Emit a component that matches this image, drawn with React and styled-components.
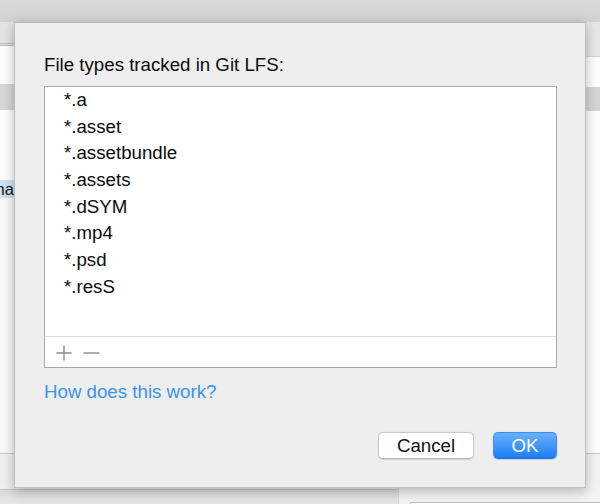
import React from 'react';
import styled, { createGlobalStyle } from 'styled-components';

const GlobalStyle = createGlobalStyle`
	html, body {
		margin: 0;
		padding: 0;
		width: 600px;
		height: 504px;
		overflow: hidden;
		background: #ffffff;
	}
	* {
		box-sizing: border-box;
	}
`;

const FONT = `"Liberation Sans", "Helvetica Neue", Arial, sans-serif`;

/* the window sitting behind the sheet */
const Window = styled.div`
	position: relative;
	width: 600px;
	height: 504px;
	display: flex;
	flex-direction: column;
	font-family: ${FONT};
	overflow: hidden;
`;

const TitleBar = styled.div`
	height: 22px;
	flex: none;
	background: linear-gradient(#d9d9d9, #d2d2d2);
`;

const Panes = styled.div`
	flex: 1;
	display: flex;
	min-height: 0;
`;

const Pane = styled.div`
	display: flex;
	flex-direction: column;
	width: ${(p) => p.width || 'auto'};
	flex: ${(p) => (p.width ? 'none' : 1)};
	border-left: ${(p) => (p.divided ? '1px solid #d4d4d4' : 'none')};
`;

const Band = styled.div`
	flex: none;
	height: ${(p) => p.h}px;
	background: ${(p) => p.bg || '#ffffff'};
	border-bottom: ${(p) => p.rule || 'none'};
	font-size: 16.5px;
	line-height: ${(p) => p.h}px;
	color: #111;
	white-space: nowrap;
	overflow: hidden;
`;

const SelectedLabel = styled.span`
	display: block;
	margin-left: -9px;
`;

const Filler = styled.div`
	flex: 1;
	background: ${(p) => p.bg || '#ffffff'};
`;

const Footer = styled.div`
	flex: none;
	height: 51px;
	border-top: 1px solid #c9c9c9;
	display: flex;
	flex-direction: column;
	background: ${(p) => p.bg || '#efefef'};
`;

const FooterStrip = styled.div`
	flex: 1;
	background: linear-gradient(#dcdcdc, #e6e6e6);
	border-top: 1px solid #c6c6c6;
`;

const FooterBox = styled.div`
	margin: 48px 0 0 11px;
	flex: 1;
	background: #ffffff;
	border-top: 1px solid #bcbcbc;
	border-left: 1px solid #cfcfcf;
`;

/* the sheet itself */
const Sheet = styled.div`
	position: absolute;
	left: 14px;
	top: 22px;
	width: 572px;
	height: 466px;
	background: #eeeeee;
	border: 1px solid #bdbdbd;
	border-top: 1px solid #b8b8b8;
	box-shadow: 0 3px 12px rgba(0, 0, 0, 0.28);
	padding: 31px 28px 0 29px;
	display: flex;
	flex-direction: column;
	font-family: ${FONT};
	font-size: 18.7px;
	color: #0c0c0c;
`;

const Heading = styled.div`
	line-height: 22px;
	margin-bottom: 10px;
`;

const ListBox = styled.div`
	height: 282px;
	background: #ffffff;
	border: 1px solid #a9a9a9;
	display: flex;
	flex-direction: column;
`;

const List = styled.ul`
	list-style: none;
	margin: 0;
	padding: 0;
	height: 250px;
	border-bottom: 1px solid #dcdcdc;
`;

const Row = styled.li`
	height: 26.67px;
	line-height: 26.67px;
	padding-left: 19px;
`;

const ListTools = styled.div`
	flex: 1;
	display: flex;
	align-items: center;
	gap: 11px;
	padding: 1px 0 0 10px;
`;

const ToolButton = styled.button`
	border: none;
	background: none;
	padding: 0;
	width: 17px;
	height: 17px;
	display: flex;
	align-items: center;
	justify-content: center;
	color: #8a8a8a;
`;

const HelpLink = styled.a`
	display: block;
	margin-top: 13px;
	line-height: 22px;
	color: #3a93f6;
	text-decoration: none;
`;

const Actions = styled.div`
	margin-top: 29px;
	display: flex;
	justify-content: flex-end;
	gap: 19px;
`;

const Button = styled.button`
	height: 27px;
	width: ${(p) => p.w}px;
	padding: 0;
	border-radius: 5px;
	font-family: ${FONT};
	font-size: 18.7px;
	line-height: 25px;
	color: ${(p) => (p.primary ? '#ffffff' : '#111111')};
	background: ${(p) =>
		p.primary ? 'linear-gradient(#6cb0fa, #1a7ff8)' : '#ffffff'};
	border: 1px solid ${(p) => (p.primary ? '#3b8ef3' : '#c9c9c9')};
	border-bottom-color: ${(p) => (p.primary ? '#1c6fe0' : '#b5b5b5')};
	box-shadow: 0 0.5px 1px rgba(0, 0, 0, 0.12);
`;

const Plus = () => (
	<svg width="16" height="16" viewBox="0 0 16 16">
		<path d="M8 0.5v15M0.5 8h15" stroke="currentColor" strokeWidth="1.4" fill="none" />
	</svg>
);

const Minus = () => (
	<svg width="17" height="16" viewBox="0 0 17 16">
		<path d="M0.5 8h16" stroke="currentColor" strokeWidth="1.4" fill="none" />
	</svg>
);

const fileTypes = ['*.a', '*.asset', '*.assetbundle', '*.assets', '*.dSYM', '*.mp4', '*.psd', '*.resS'];

export default function App() {
	return (
		<>
			<GlobalStyle />
			<Window>
				<TitleBar />
				<Panes>
					<Pane width="398px">
						<Band h={24} bg="#e4e4e4" rule="3px double #bdbdbd" />
						<Band h={38} />
						<Band h={26} bg="#d8d8d8" />
						<Band h={70} />
						<Band h={18} bg="#cfe4f6">
							<SelectedLabel>master</SelectedLabel>
						</Band>
						<Filler bg="#f9f9f9" />
						<Footer>
							<Band h={35} bg="#efefef" />
							<FooterStrip />
						</Footer>
					</Pane>
					<Pane divided>
						<Band h={35} bg="#e7e7e7" rule="1px solid #d2d2d2" />
						<Band h={30} />
						<Band h={24} bg="#d6d6d6" />
						<Filler />
						<Footer bg="#f4f4f4">
							<FooterBox />
						</Footer>
					</Pane>
				</Panes>

				<Sheet>
					<Heading>File types tracked in Git LFS:</Heading>
					<ListBox>
						<List>
							{fileTypes.map((t) => (
								<Row key={t}>{t}</Row>
							))}
						</List>
						<ListTools>
							<ToolButton aria-label="Add"><Plus /></ToolButton>
							<ToolButton aria-label="Remove"><Minus /></ToolButton>
						</ListTools>
					</ListBox>
					<HelpLink href="#">How does this work?</HelpLink>
					<Actions>
						<Button w={96}>Cancel</Button>
						<Button w={64} primary>OK</Button>
					</Actions>
				</Sheet>
			</Window>
		</>
	);
}
